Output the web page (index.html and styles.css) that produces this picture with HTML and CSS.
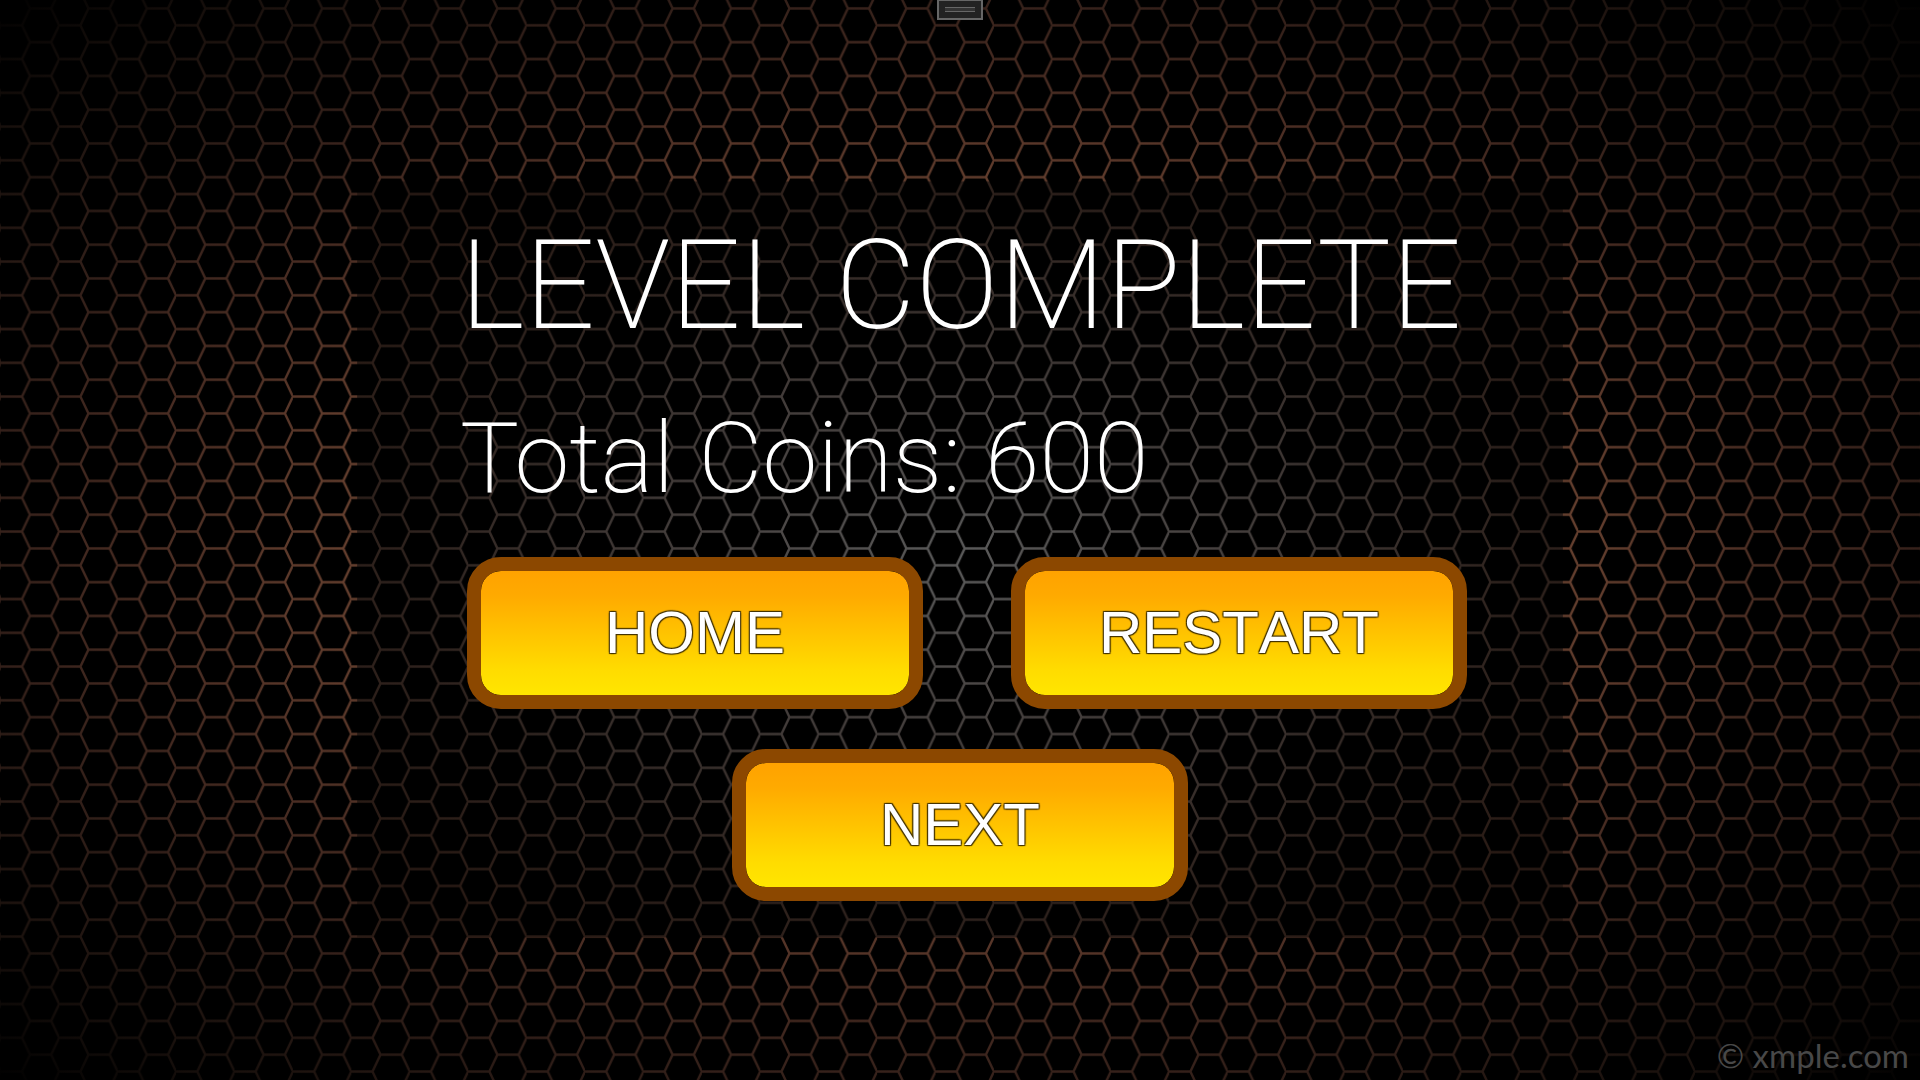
FILE: index.html
```html
<!DOCTYPE html>
<html lang="en">
<head>
<meta charset="utf-8">
<title>Level Complete</title>
<link rel="stylesheet" href="styles.css">
</head>
<body>
<svg class="backdrop" aria-hidden="true">
  <defs>
    <pattern id="hex" x="0.8" y="0" width="58.42" height="33.75" patternUnits="userSpaceOnUse">
      <path d="M0 25.3H21.2L29.2 8.4H50.4L58.42 25.3M21.2 25.3L29.2 42.15M21.2 -8.45L29.2 8.4M50.4 42.15L58.42 25.3M50.4 8.4L58.42 -8.45" fill="none" stroke="#fff" stroke-width="2.4"/>
    </pattern>
    <mask id="mesh"><rect width="100%" height="100%" fill="url(#hex)"/></mask>
    <radialGradient id="outer" cx="50%" cy="50%" r="71%">
      <stop offset="0" stop-color="#70493a"/>
      <stop offset="0.45" stop-color="#66402f"/>
      <stop offset="0.6" stop-color="#4a2d23"/>
      <stop offset="0.74" stop-color="#301e18"/>
      <stop offset="0.87" stop-color="#1a110d"/>
      <stop offset="1" stop-color="#000"/>
    </radialGradient>
    <radialGradient id="inner" cx="50%" cy="50%" r="60%">
      <stop offset="0" stop-color="#5c5c5c"/>
      <stop offset="0.4" stop-color="#443e3c"/>
      <stop offset="0.75" stop-color="#30241f"/>
      <stop offset="1" stop-color="#2a1b15"/>
    </radialGradient>
  </defs>
  <g mask="url(#mesh)">
    <rect width="100%" height="100%" fill="url(#outer)"/>
    <rect x="18.6%" y="16.8%" width="62.8%" height="70%" fill="url(#inner)"/>
  </g>
</svg>
<button class="handle" aria-label="Open menu"><span class="grip"></span></button>
<main class="screen">
  <div class="panel">
    <h1 class="title">LEVEL COMPLETE</h1>
    <p class="coins">Total Coins: 600</p>
    <div class="actions">
      <button class="action">HOME</button>
      <button class="action">RESTART</button>
    </div>
    <div class="actions next">
      <button class="action">NEXT</button>
    </div>
  </div>
</main>
<footer class="credit">© xmple.com</footer>
</body>
</html>
```
FILE: styles.css
```css
* { box-sizing: border-box; }
body {
  margin: 0;
  min-height: 100vh;
  background: #000;
  color: #fff;
  font-family: Roboto, "Liberation Sans", sans-serif;
  overflow: hidden;
}
.backdrop {
  position: absolute;
  inset: 0;
  width: 100%;
  height: 100%;
}
.handle {
  position: absolute;
  top: 0;
  left: 50%;
  transform: translateX(-50%);
  display: flex;
  align-items: center;
  justify-content: center;
  width: 46px;
  height: 20px;
  padding: 0;
  border: 2px solid #666;
  border-top-width: 1px;
  background: #222;
}
.grip {
  width: 30px;
  height: 5px;
  border: solid #666;
  border-width: 1px 0;
  background: #333;
}
.screen {
  position: relative;
  display: flex;
  justify-content: center;
  padding: 214px 24px 0;
}
.panel { width: 1000px; }
.title {
  margin: 0;
  font-size: 124px;
  font-weight: 200;
  line-height: 144px;
  white-space: nowrap;
}
.coins {
  margin: 44px 0 0;
  font-size: 99px;
  font-weight: 200;
  line-height: 112px;
  white-space: nowrap;
}
.actions {
  display: flex;
  gap: 88px;
  margin-top: 43px;
  padding-left: 7px;
}
.next {
  justify-content: center;
  margin-top: 40px;
  padding-left: 0;
}
.action {
  flex: none;
  width: 456px;
  height: 152px;
  padding: 0;
  border: 14px solid #8c4800;
  border-radius: 34px;
  background: linear-gradient(#ffa200, #ffaa00 20%, #ffdc00 80%, #ffe600) padding-box;
  color: #fff;
  font-family: "Liberation Sans", Arial, sans-serif;
  font-size: 60px;
  font-kerning: none;
  line-height: 72px;
  text-shadow: 1px 1px 1px #430, -1px -1px 1px #430, 1px -1px 1px #430, -1px 1px 1px #430;
}
.credit {
  position: absolute;
  right: 11px;
  bottom: 5px;
  color: #484848;
  font-family: Lato, sans-serif;
  font-size: 33px;
  line-height: 40px;
}
```
